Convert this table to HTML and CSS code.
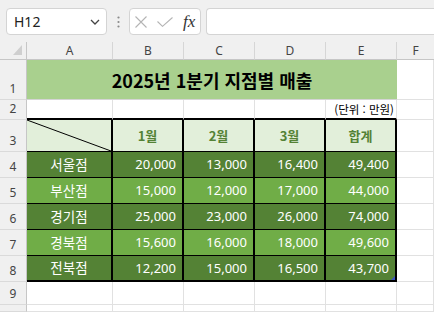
FILE: index.html
```html
<!DOCTYPE html>
<html lang="ko">
<head>
<meta charset="utf-8">
<link rel="stylesheet" href="styles.css">
</head>
<body>
<div class="app">
  <div class="fbar">
    <div class="namebox">
      <span class="nb-text">H12</span>
      <svg class="chev" width="10" height="6" viewBox="0 0 10 6"><path d="M1 1 L5 5 L9 1" fill="none" stroke="#444" stroke-width="1.3"/></svg>
    </div>
    <div class="dots">
      <svg width="3" height="12" viewBox="0 0 3 12"><circle cx="1.5" cy="1.5" r="1.1" fill="#8a8a8a"/><circle cx="1.5" cy="6" r="1.1" fill="#8a8a8a"/><circle cx="1.5" cy="10.5" r="1.1" fill="#8a8a8a"/></svg>
    </div>
    <div class="fxbox">
      <svg width="12" height="12" viewBox="0 0 12 12"><path d="M0.5 0.5 L11.5 11.5 M11.5 0.5 L0.5 11.5" stroke="#b4b4b4" stroke-width="1.1" fill="none"/></svg>
      <svg width="16" height="10" viewBox="0 0 16 10"><path d="M0.5 4.5 L5.5 9.3 L15.5 0.5" stroke="#b4b4b4" stroke-width="1.1" fill="none"/></svg>
      <span class="fx">fx</span>
    </div>
    <div class="finput"></div>
  </div>
  <div class="sheet">
    <div class="corner"><svg width="9" height="10" viewBox="0 0 9 10"><polygon points="9,0 9,10 0,10" fill="#cfcfcf"/></svg></div>
    <div class="ch">A</div><div class="ch">B</div><div class="ch">C</div><div class="ch">D</div><div class="ch">E</div><div class="ch last">F</div>

    <div class="rh">1</div>
    <div class="title">2025년 1분기 지점별 매출</div>
    <div class="c"></div>

    <div class="rh">2</div>
    <div class="c top"></div><div class="c top"></div><div class="c top"></div><div class="c top"></div>
    <div class="c top unit">(단위 : 만원)</div>
    <div class="c"></div>

    <div class="rh">3</div>
    <div class="t hd diag"><svg viewBox="0 0 100 100" preserveAspectRatio="none"><line x1="0" y1="0" x2="100" y2="100" stroke="#000" stroke-width="1" vector-effect="non-scaling-stroke"/></svg></div>
    <div class="t hd">1월</div><div class="t hd">2월</div><div class="t hd">3월</div><div class="t hd">합계</div>
    <div class="c"></div>

    <div class="rh">4</div>
    <div class="t dk nm">서울점</div><div class="t dk num">20,000</div><div class="t dk num">13,000</div><div class="t dk num">16,400</div><div class="t dk num">49,400</div>
    <div class="c"></div>

    <div class="rh">5</div>
    <div class="t lt nm">부산점</div><div class="t lt num">15,000</div><div class="t lt num">12,000</div><div class="t lt num">17,000</div><div class="t lt num">44,000</div>
    <div class="c"></div>

    <div class="rh">6</div>
    <div class="t dk nm">경기점</div><div class="t dk num">25,000</div><div class="t dk num">23,000</div><div class="t dk num">26,000</div><div class="t dk num">74,000</div>
    <div class="c"></div>

    <div class="rh">7</div>
    <div class="t lt nm">경북점</div><div class="t lt num">15,600</div><div class="t lt num">16,000</div><div class="t lt num">18,000</div><div class="t lt num">49,600</div>
    <div class="c"></div>

    <div class="rh">8</div>
    <div class="t dk nm bot">전북점</div><div class="t dk num bot">12,200</div><div class="t dk num bot">15,000</div><div class="t dk num bot">16,500</div><div class="t dk num bot mark">43,700</div>
    <div class="c"></div>

    <div class="rh">9</div>
    <div class="c"></div><div class="c"></div><div class="c"></div><div class="c"></div><div class="c"></div><div class="c"></div>

    <div class="rh"></div>
    <div class="c"></div><div class="c"></div><div class="c"></div><div class="c"></div><div class="c"></div><div class="c"></div>
  </div>
</div>
</body>
</html>
```

FILE: styles.css
```css
* { box-sizing: border-box; }
html, body { margin: 0; padding: 0; }
body {
  width: 434px;
  height: 312px;
  overflow: hidden;
  background: #f0f0f0;
  font-family: "Noto Sans", "Noto Sans CJK KR", sans-serif;
}
.app { width: 434px; height: 312px; display: flex; flex-direction: column; }

.fbar {
  height: 42px;
  flex: none;
  display: flex;
  align-items: flex-start;
  padding: 8px 0 0 6px;
}
.namebox {
  width: 101px;
  height: 27px;
  background: #fff;
  border: 1px solid #d4d4d4;
  border-radius: 4px;
  display: flex;
  align-items: center;
  justify-content: space-between;
  padding: 0 6px 0 7px;
}
.nb-text { font-size: 14px; color: #222; line-height: 1; }
.dots {
  width: 22px;
  height: 27px;
  display: flex;
  align-items: center;
  justify-content: center;
}
.fxbox {
  width: 72px;
  height: 27px;
  background: #fff;
  border: 1px solid #d4d4d4;
  border-radius: 4px;
  display: flex;
  align-items: center;
  padding: 0 4px 0 5px;
  gap: 10px;
}
.fx {
  font-family: "Liberation Serif", "DejaVu Serif", serif;
  font-style: italic;
  font-size: 17px;
  color: #333;
  line-height: 1;
}
.finput {
  flex: 1;
  height: 27px;
  margin-left: 5px;
  background: #fff;
  border: 1px solid #d4d4d4;
  border-right: none;
  border-radius: 4px 0 0 4px;
}

.sheet {
  flex: 1;
  display: grid;
  grid-template-columns: 27px 86px 71px 71px 71px 71px 1fr;
  grid-template-rows: 18px 40px 20px 32px 26px 26px 26px 26px 26px 23px 1fr;
  background: #fff;
}
.corner {
  background: #f0f0f0;
  border-right: 1px solid #c6c6c6;
  border-bottom: 1px solid #c6c6c6;
  display: flex;
  align-items: flex-end;
  justify-content: flex-end;
  padding: 0 4px 4px 0;
}
.ch {
  background: #f0f0f0;
  border-right: 1px solid #d6d6d6;
  border-bottom: 1px solid #c6c6c6;
  display: flex;
  align-items: center;
  justify-content: center;
  font-size: 12px;
  color: #444;
  line-height: 1;
}
.ch.last { border-right: none; }
.rh {
  background: #f0f0f0;
  border-right: 1px solid #c6c6c6;
  border-bottom: 1px solid #dadada;
  display: flex;
  align-items: flex-end;
  justify-content: center;
  padding-bottom: 4px;
  font-size: 12px;
  color: #444;
  line-height: 1;
}
.c {
  border-right: 1px solid #e1e1e1;
  border-bottom: 1px solid #e1e1e1;
}
.c.top { border-bottom: 2px solid #000; }
.unit {
  display: flex;
  align-items: flex-end;
  justify-content: flex-end;
  padding: 0 2px 3px 0;
  font-family: "Noto Sans CJK KR", sans-serif;
  font-size: 11.5px;
  line-height: 1;
  color: #000;
  white-space: nowrap;
}
.title {
  grid-column: span 5;
  background: #a9d08e;
  border-bottom: 1px solid #d4d4d4;
  display: flex;
  align-items: center;
  justify-content: center;
  font-family: "Noto Sans CJK KR", sans-serif;
  font-weight: 700;
  font-size: 18px;
  color: #000;
  line-height: 1;
}
.t {
  border-right: 2px solid #000;
  border-bottom: 1px solid #000;
  display: flex;
  align-items: center;
  font-size: 13px;
  line-height: 1;
  color: #fff;
}
.t.bot { border-bottom: 2px solid #000; }
.hd {
  background: #e2efda;
  justify-content: center;
  color: #548235;
  font-family: "Noto Sans CJK KR", sans-serif;
  font-weight: 700;
  font-size: 13px;
}
.diag { padding: 0; }
.diag svg { width: 100%; height: 100%; display: block; }
.dk { background: #548235; }
.lt { background: #70ad47; }
.nm {
  justify-content: center;
  font-family: "Noto Sans CJK KR", sans-serif;
  font-size: 13.5px;
}
.num { justify-content: flex-end; padding-right: 6px; }
.mark { position: relative; }
.mark::after {
  content: "";
  position: absolute;
  right: 0;
  bottom: 0;
  width: 0;
  height: 0;
  border-left: 4px solid transparent;
  border-bottom: 4px solid #3b55c4;
}
```
